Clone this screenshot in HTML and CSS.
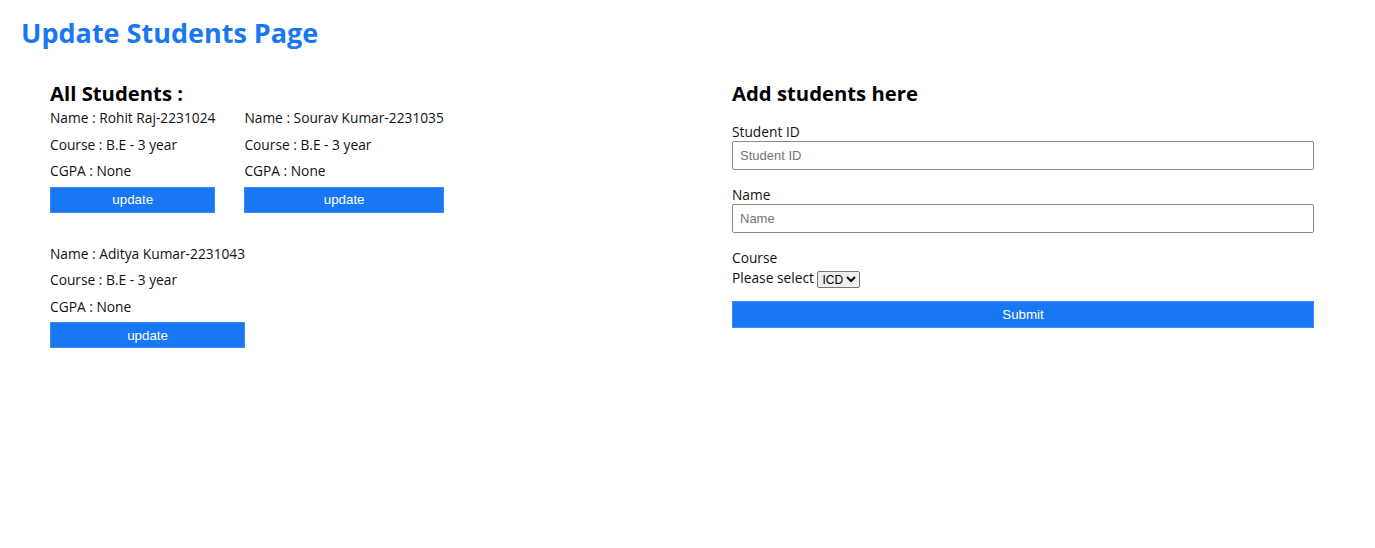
FILE: index.html
```html
<!DOCTYPE html>
<html lang="en">
<head>
<meta charset="utf-8">
<title>Update Students Page</title>
<link rel="stylesheet" href="styles.css">
</head>
<body>
<h1 class="page-title">Update Students Page</h1>
<main class="layout">
  <section class="students">
    <h2 class="section-title">All Students :</h2>
    <div class="cards">
      <div class="card">
        <p class="line">Name : Rohit Raj-2231024</p>
        <p class="line">Course : B.E - 3 year</p>
        <p class="line">CGPA : None</p>
        <button class="btn" type="button">update</button>
      </div>
      <div class="card">
        <p class="line">Name : Sourav Kumar-2231035</p>
        <p class="line">Course : B.E - 3 year</p>
        <p class="line">CGPA : None</p>
        <button class="btn" type="button">update</button>
      </div>
      <div class="card">
        <p class="line">Name : Aditya Kumar-2231043</p>
        <p class="line">Course : B.E - 3 year</p>
        <p class="line">CGPA : None</p>
        <button class="btn" type="button">update</button>
      </div>
    </div>
  </section>
  <section class="add">
    <h2 class="section-title">Add students here</h2>
    <form class="form">
      <label class="field-label" for="sid">Student ID</label>
      <input class="field-input" id="sid" type="text" placeholder="Student ID">
      <label class="field-label" for="sname">Name</label>
      <input class="field-input" id="sname" type="text" placeholder="Name">
      <div class="field-label">Course</div>
      <div class="select-row">Please select <select class="select"><option>ICD</option></select></div>
      <button class="btn submit" type="button">Submit</button>
    </form>
  </section>
</main>
</body>
</html>
```
FILE: styles.css
```css
body {
  margin: 0;
  font-family: "Open Sans", "Noto Sans", sans-serif;
  color: #111;
  background: #fff;
}
.page-title {
  margin: 0;
  padding: 14px 0 0 21px;
  font-size: 27px;
  line-height: 38px;
  font-weight: 700;
  color: #1877f2;
}
.layout {
  display: flex;
  padding: 28px 0 0 50px;
}
.students {
  width: 560px;
  margin-right: 122px;
}
.add {
  width: 582px;
}
.section-title {
  margin: 0 0 2px;
  font-size: 20.3px;
  line-height: 26px;
  font-weight: 700;
  color: #000;
}
.cards {
  display: flex;
  flex-wrap: wrap;
  align-items: flex-start;
  column-gap: 29px;
  row-gap: 31px;
}
.card {
  display: flex;
  flex-direction: column;
}
.line {
  margin: 0 0 6.5px;
  font-size: 13.75px;
  line-height: 20px;
  white-space: nowrap;
}
.line:nth-child(3) {
  margin-bottom: 5.5px;
}
.btn {
  height: 26px;
  border: 1px solid #3d8cf5;
  background: #1877f2;
  color: #fff;
  font-family: "Liberation Sans", Arial, sans-serif;
  font-size: 13.33px;
  padding: 0;
}
.form {
  display: flex;
  flex-direction: column;
  padding-top: 14px;
}
.field-label {
  font-size: 13.75px;
  line-height: 19px;
}
.field-input {
  height: 29px;
  box-sizing: border-box;
  border: 1px solid #8a8a8a;
  border-radius: 2px;
  padding: 0 7px;
  margin-bottom: 15px;
  font-family: "Liberation Sans", Arial, sans-serif;
  font-size: 13px;
}
.field-input::placeholder {
  color: #757575;
}
.select-row {
  font-size: 13.75px;
  line-height: 20px;
  height: 20px;
  margin-top: 1px;
  margin-bottom: 13px;
}
.select {
  height: 17px;
  padding: 0;
  font-family: "Liberation Sans", Arial, sans-serif;
  font-size: 12px;
  border: 1px solid #767676;
  border-radius: 2px;
  vertical-align: middle;
}
.submit {
  height: 27px;
}
```
